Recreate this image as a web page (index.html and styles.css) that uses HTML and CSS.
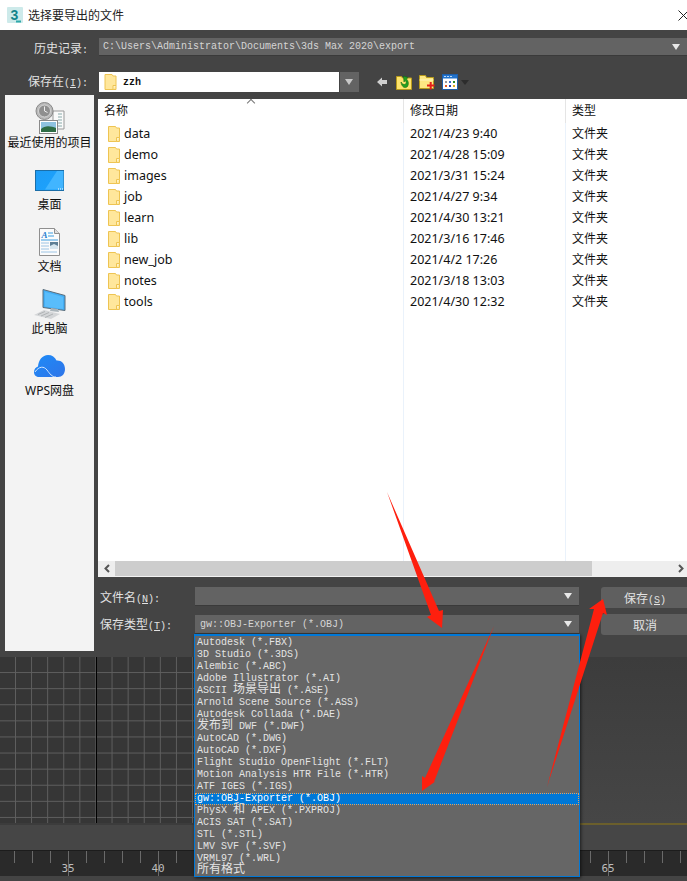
FILE: index.html
```html
<!DOCTYPE html>
<html lang="zh-CN">
<head>
  <meta charset="UTF-8">
  <title>选择要导出的文件</title>
  <link rel="stylesheet" href="styles.css">
</head>
<body>
  <svg class="defs" width="0" height="0">
    <symbol id="folder" viewBox="0 0 12 16">
      <path d="M.5.5h7l1 1.500h3v13.500H.5z" fill="#ffe79c" stroke="#eec452"/>
      <path d="M8.500 15.500v-4h3" fill="#fff3c9" stroke="#eec452"/>
    </symbol>
  </svg>

  <header class="titlebar">
    <svg class="app-icon" width="16" height="16" viewBox="0 0 16 16">
      <rect width="16" height="16" rx="1" fill="#cdeaea"/>
      <text x="7.500" y="12.500" class="app-icon-text">3</text>
      <rect x="9" y="13.500" width="5" height="2" fill="#2fa8aa"/>
    </svg>
    <span class="title">选择要导出的文件</span>
    <svg class="close" width="9" height="11" viewBox="0 0 9 11"><path d="M.5.5l10 10M.5 10.500l10-10" stroke="#222" fill="none"/></svg>
  </header>

  <main class="dialog">
    <div class="history-row">
      <label class="top-label">历史记录<span class="ascii">:</span></label>
      <div class="combo path-combo">C:\Users\Administrator\Documents\3ds Max 2020\export</div>
    </div>

    <div class="savein-row">
      <label class="top-label savein-label">保存在<span class="ascii">(<u>I</u>):</span></label>
      <div class="savein-field">
        <svg class="savein-folder" width="13" height="16"><use href="#folder"/></svg>
        <span>zzh</span>
      </div>
      <div class="savein-drop"></div>
      <div class="toolbar">
        <svg width="10" height="10" viewBox="0 0 10 10"><path d="M0 5l5-4.500v2.500h5v4H5v2.500z" fill="#cfcfcf"/></svg>
        <svg class="tool-up" width="16" height="16" viewBox="0 0 16 16">
          <path d="M.5 2.500h5l1 1.500h9v11.500H.5z" fill="#fde36c" stroke="#b79a1c"/>
          <path d="M5 8c2 3 4 3 5 1.500 1-1.500-1-3-1-3L8 8 7.500 2 12 3.500l-1.500 1.500c2 2 2.500 5 1 7.500C9 15 5.500 13 5 8z" fill="#23a01f" stroke="#0f6a12" stroke-width=".6"/>
        </svg>
        <svg class="tool-new" width="16" height="16" viewBox="0 0 16 16">
          <path d="M.5 1.500h6l1 2h7v11H.5z" fill="#fde883" stroke="#b79a1c"/>
          <path d="M.5 6h14" stroke="#fff6c0"/>
          <path d="M8 11.500h7.500M11.700 8v7.500" stroke="#e5201a" stroke-width="2"/>
        </svg>
        <svg class="tool-view" width="16" height="16" viewBox="0 0 16 16">
          <rect x=".5" y=".5" width="15" height="15" fill="#fff" stroke="#1f5ea8"/>
          <rect x="1" y="1" width="14" height="3.500" fill="#2273cc"/>
          <path d="M2 2h2v1H2zM5 2h2v1H5zM8 2h2v1H8z" fill="#bcd8f5"/>
          <path d="M3 7h2v2H3z" fill="#999"/>
          <path d="M7 7h2v2H7z" fill="#3b6fd0"/>
          <path d="M11 7h2v2h-2z" fill="#2a8a2a"/>
          <path d="M3 11h2v2H3z" fill="#e85a1c"/>
          <path d="M7 11h2v2H7z" fill="#243fb0"/>
          <path d="M11 11h2v2h-2z" fill="#e0a818"/>
        </svg>
        <span class="tool-caret"></span>
      </div>
    </div>

    <div class="dialog-main">
      <nav class="places">
        <a class="place">
          <span class="place-icon">
            <svg width="30" height="33" viewBox="0 0 30 33">
              <path d="M18 9h11v18H18z" fill="#fafafa" stroke="#999"/>
              <path d="M23 12h4M23 15h4M23 18h4M23 21h4M23 24h4" stroke="#8aa"/>
              <circle cx="9.500" cy="9" r="8.500" fill="#b9b9b9" stroke="#8a8a8a"/>
              <circle cx="9.500" cy="9" r="6" fill="#8f8f8f" stroke="#d5d5d5"/>
              <path d="M9.500 4.500V9l3 1.500" stroke="#eee" fill="none"/>
              <rect x="4.500" y="18.500" width="18" height="13" fill="#fff" stroke="#8a8a8a"/>
              <rect x="6" y="20" width="15" height="10" fill="#8fc3e0"/>
              <path d="M6 27c4-4 10-3 15-1v4H6z" fill="#2f6d45"/>
            </svg>
          </span>
          <span class="place-name">最近使用的项目</span>
        </a>
        <a class="place">
          <span class="place-icon">
            <svg width="29" height="21" viewBox="0 0 29 21">
              <defs><linearGradient id="deskGrad" x1="0" y1="0" x2="1" y2="1"><stop offset="0" stop-color="#1e9cf5"/><stop offset="1" stop-color="#1ba3ff"/></linearGradient></defs>
              <rect x=".5" y=".5" width="28" height="20" fill="url(#deskGrad)" stroke="#1b6ea8"/>
              <path d="M10 19.500L22 1h6.500v18.500z" fill="#41b5ff"/>
              <path d="M23 19h1M25 19h1M27 19h1" stroke="#fff"/>
            </svg>
          </span>
          <span class="place-name">桌面</span>
        </a>
        <a class="place">
          <span class="place-icon">
            <svg width="21" height="28" viewBox="0 0 21 28">
              <path d="M.5.500h15l5 5v22H.5z" fill="#fbfbfb" stroke="#8f8f8f"/>
              <path d="M15.500.500v5h5" fill="#ddd" stroke="#8f8f8f"/>
              <text x="2.500" y="10" class="doc-letter">A</text>
              <path d="M9 5h5M9 8h6M2 12h17" stroke="#3d9de0"/>
              <path d="M2 15h8M2 18h8M2 21h8M2 24h16" stroke="#9cc4e4"/>
              <rect x="11" y="14" width="8" height="7" fill="#5e7f95"/>
              <path d="M11 18l4-2 4 2v3h-8z" fill="#d7e6ee"/>
            </svg>
          </span>
          <span class="place-name">文档</span>
        </a>
        <a class="place">
          <span class="place-icon">
            <svg width="32" height="30" viewBox="0 0 32 30">
              <path d="M9 .500l22 6v15l-22-3z" fill="#43aef5" stroke="#5b6d7a"/>
              <path d="M11 3l18 5v12L11 17.500z" fill="#59bdfb"/>
              <path d="M17 19l7 1 1 3-9-1z" fill="#aab4ba"/>
              <path d="M0 26l10-5 16 4-9 5z" fill="#d4d6d8"/>
              <path d="M4 25.500l7-3M7 27l8-3.500M11 28.500l8-3.500" stroke="#b0b3b5"/>
            </svg>
          </span>
          <span class="place-name">此电脑</span>
        </a>
        <a class="place">
          <span class="place-icon">
            <svg width="31" height="22" viewBox="0 0 31 22">
              <defs><linearGradient id="cloudGrad" x1="0" y1="0" x2="1" y2="1"><stop offset="0" stop-color="#1d8cf8"/><stop offset="1" stop-color="#2f74e8"/></linearGradient></defs>
              <path d="M5 22C1.500 22 0 19.500 0 17c0-3 2-5 4-5.500C4.500 5 8.500 0 14 0c4 0 7 2 8.500 5.500C27 5 31 8.500 31 14c0 5-3 8-7 8z" fill="url(#cloudGrad)"/>
              <path d="M1 17c4-6 9-6 12-2 3 4 5 7 9 7" stroke="#cfe6ff" fill="none"/>
            </svg>
          </span>
          <span class="place-name">WPS网盘</span>
        </a>
      </nav>

      <section class="browser">
        <div class="file-list">
          <div class="list-head">
            <span class="head-cell head-name">名称<i class="sort-caret"></i></span>
            <span class="head-cell">修改日期</span>
            <span class="head-cell head-type">类型</span>
          </div>
          <div class="list-body" id="fileRows"></div>
          <div class="hscroll">
            <span class="scroll-btn">
              <svg width="6" height="9" viewBox="0 0 6 9"><path d="M5 1L1.500 4.500 5 8" stroke="#555" stroke-width="2" fill="none"/></svg>
            </span>
            <span class="scroll-thumb"></span>
            <span class="scroll-end">
              <svg width="6" height="9" viewBox="0 0 6 9"><path d="M1 1l3.500 3.500L1 8" stroke="#555" stroke-width="2" fill="none"/></svg>
            </span>
          </div>
        </div>

        <div class="save-form">
          <div class="form-fields">
            <div class="form-row">
              <label>文件名<span class="ascii">(<u>N</u>):</span></label>
              <div class="combo field-combo"></div>
            </div>
            <div class="form-row type-row">
              <label>保存类型<span class="ascii">(<u>T</u>):</span></label>
              <div class="combo field-combo">gw::OBJ-Exporter (*.OBJ)</div>
            </div>
          </div>
          <div class="form-buttons">
            <button class="btn">保存<span class="ascii">(<u>S</u>)</span></button>
            <button class="btn">取消</button>
          </div>
        </div>
      </section>
    </div>
  </main>

  <section class="viewport">
    <div class="viewport-top">
      <div class="grid-view"></div>
      <div class="side-view"></div>
    </div>
    <div class="band"></div>
    <div class="timeline">
      <span class="tick-cell">35</span>
      <span class="tick-cell">40</span>
      <span class="tick-cell">45</span>
      <span class="tick-cell">50</span>
      <span class="tick-cell">55</span>
      <span class="tick-cell">60</span>
      <span class="tick-cell">65</span>
    </div>
    <div class="status"></div>
  </section>

  <ul class="type-menu" id="typeMenu"></ul>

  <svg class="arrows" width="687" height="881" viewBox="0 0 687 881">
    <path d="M387 492L439 611l4-1-1 18-15-11 4-2z"/>
    <path d="M494 626L434 782l2-1-14 10v-15l3 2z"/>
    <path d="M547 787L594 609h-5l14-10 4 16-4-2z"/>
  </svg>

  <script src="app.js"></script>
</body>
</html>
```

FILE: app.js
```js
const files = [
  ["data", "2021/4/23 9:40"],
  ["demo", "2021/4/28 15:09"],
  ["images", "2021/3/31 15:24"],
  ["job", "2021/4/27 9:34"],
  ["learn", "2021/4/30 13:21"],
  ["lib", "2021/3/16 17:46"],
  ["new_job", "2021/4/2 17:26"],
  ["notes", "2021/3/18 13:03"],
  ["tools", "2021/4/30 12:32"]
];

const types = [
  "Autodesk (*.FBX)",
  "3D Studio (*.3DS)",
  "Alembic (*.ABC)",
  "Adobe Illustrator (*.AI)",
  "ASCII <b>场景导出</b> (*.ASE)",
  "Arnold Scene Source (*.ASS)",
  "Autodesk Collada (*.DAE)",
  "<b>发布到</b> DWF (*.DWF)",
  "AutoCAD (*.DWG)",
  "AutoCAD (*.DXF)",
  "Flight Studio OpenFlight (*.FLT)",
  "Motion Analysis HTR File (*.HTR)",
  "ATF IGES (*.IGS)",
  "gw::OBJ-Exporter (*.OBJ)",
  "PhysX <b>和</b> APEX (*.PXPROJ)",
  "ACIS SAT (*.SAT)",
  "STL (*.STL)",
  "LMV SVF (*.SVF)",
  "VRML97 (*.WRL)",
  "<b>所有格式</b>"
];

const rows = document.getElementById("fileRows");
files.forEach((file) => {
  const row = document.createElement("div");
  row.className = "file-row";
  row.innerHTML = `
    <span class="file-name"><svg width="12" height="16"><use href="#folder"/></svg>${file[0]}</span>
    <span class="file-date">${file[1]}</span>
    <span class="file-type">文件夹</span>
  `;
  rows.appendChild(row);
});

const menu = document.getElementById("typeMenu");
types.forEach((type, index) => {
  const item = document.createElement("li");
  item.innerHTML = type;
  if (index === 13) item.className = "selected";
  menu.appendChild(item);
});
```

FILE: styles.css
```css
* {
  box-sizing: border-box;
}
body {
  margin: 0;
  width: 687px;
  height: 881px;
  overflow: hidden;
  position: relative;
  background-color: #444;
  font-family: "Noto Sans", "Noto Sans CJK SC", sans-serif;
  font-size: 12px;
}
.defs {
  position: absolute;
}
u {
  text-underline-offset: 1px;
}
.ascii {
  font-family: "Liberation Mono", monospace;
  font-size: 10px;
}

/* title bar */
.titlebar {
  height: 30px;
  background-color: #fff;
  display: flex;
  align-items: center;
  padding-left: 7px;
  color: #222;
}
.app-icon-text {
  font: bold 14px "Liberation Sans", sans-serif;
  fill: #14858c;
  text-anchor: middle;
}
.title {
  margin-left: 5px;
  margin-bottom: 2px;
  font-family: "Noto Sans CJK SC", sans-serif;
}
.close {
  margin-left: auto;
}

/* dialog */
.dialog {
  height: 627px;
  background-color: #444;
  padding-top: 8px;
  color: #e2e2e2;
}
.history-row {
  display: flex;
  height: 18px;
  align-items: center;
}
.top-label {
  width: 99px;
  padding-right: 11px;
  text-align: right;
  font-family: "Noto Sans CJK SC", sans-serif;
  white-space: nowrap;
}
.savein-label {
  margin-bottom: 4px;
}
.combo {
  background-color: #636363;
  border-bottom: 1px solid #3a3a3a;
  height: 100%;
  display: flex;
  align-items: center;
  position: relative;
  font-family: "Liberation Mono", "Noto Sans CJK SC", monospace;
  font-size: 10px;
  color: #d5d5d5;
  padding-left: 4px;
}
.combo::after {
  content: "";
  position: absolute;
  right: 7px;
  top: 6px;
  border-left: 4px solid transparent;
  border-right: 4px solid transparent;
  border-top: 6px solid #e8e8e8;
}
.path-combo {
  flex: 1;
}
.savein-row {
  display: flex;
  height: 20px;
  margin-top: 16px;
  align-items: center;
}
.savein-field {
  width: 240px;
  height: 20px;
  background-color: #fff;
  display: flex;
  align-items: center;
  gap: 6px;
  padding-left: 5px;
  color: #111;
  font-family: "Liberation Mono", monospace;
  font-size: 10px;
  font-weight: bold;
}
.savein-drop {
  width: 19px;
  height: 20px;
  margin-left: 1px;
  background-color: #636363;
  position: relative;
}
.savein-drop::after {
  content: "";
  position: absolute;
  left: 5px;
  top: 7px;
  border-left: 4px solid transparent;
  border-right: 4px solid transparent;
  border-top: 6px solid #c8c8c8;
}
.toolbar {
  display: flex;
  align-items: center;
  margin-left: 18px;
}
.tool-up {
  margin-left: 9px;
}
.tool-new {
  margin-left: 7px;
}
.tool-view {
  margin-left: 7px;
}
.tool-caret {
  margin-left: 3px;
  border-left: 4px solid transparent;
  border-right: 4px solid transparent;
  border-top: 5px solid #2c2c2c;
}
.dialog-main {
  display: flex;
  margin-top: 3px;
  padding-left: 5px;
  height: 556px;
}

/* places */
.places {
  width: 89px;
  background-color: #f3f3f3;
  color: #111;
  flex-shrink: 0;
}
.place {
  display: block;
  height: 62px;
  text-align: center;
}
.place-icon {
  display: flex;
  height: 40px;
  padding-top: 6px;
  align-items: center;
  justify-content: center;
}
.place-name {
  display: block;
  line-height: 16px;
  white-space: nowrap;
}
.doc-letter {
  font: italic bold 9px "Liberation Serif", serif;
  fill: #2a7fd0;
}

/* file list */
.browser {
  flex: 1;
  margin-left: 4px;
  padding-top: 4px;
}
.file-list {
  height: 478px;
  background-color: #fff;
  display: flex;
  flex-direction: column;
  color: #111;
  border-bottom: 1px solid #f2f2f2;
}
.list-head {
  display: grid;
  grid-template-columns: 306px 162px 1fr;
  height: 24px;
  position: relative;
}
.head-cell {
  padding-left: 6px;
  line-height: 24px;
  border-right: 1px solid #e5e5e5;
  position: relative;
}
.head-type {
  border-right: 0;
}
.sort-caret {
  position: absolute;
  left: 150px;
  top: 1px;
  width: 6px;
  height: 6px;
  border-left: 1px solid #777;
  border-top: 1px solid #777;
  transform: rotate(45deg);
}
.list-body {
  flex: 1;
  background-image: linear-gradient(#eaf2fb, #eaf2fb), linear-gradient(#eaf2fb, #eaf2fb);
  background-size: 1px 100%;
  background-position: 305px 0, 467px 0;
  background-repeat: no-repeat;
}
.file-row {
  display: grid;
  grid-template-columns: 306px 162px 1fr;
  height: 21px;
  align-items: center;
  font-size: 12.500px;
}
.file-name {
  display: flex;
  align-items: center;
  gap: 4px;
  padding-left: 10px;
}
.file-date {
  padding-left: 6px;
}
.file-type {
  padding-left: 6px;
  margin-top: -2px;
  font-size: 12px;
}
.hscroll {
  display: flex;
  height: 15px;
  background-color: #eee;
  align-items: center;
}
.scroll-btn {
  width: 17px;
  text-align: center;
  line-height: 0;
}
.scroll-thumb {
  width: 477px;
  height: 100%;
  background-color: #cdcdcd;
}
.scroll-end {
  margin-left: auto;
  padding-right: 3px;
  line-height: 0;
}

/* file name + type */
.save-form {
  display: flex;
  margin-top: 10px;
}
.form-fields {
  width: 481px;
  margin-right: 22px;
}
.form-row {
  display: flex;
  height: 19px;
  align-items: center;
  font-family: "Noto Sans CJK SC", sans-serif;
}
.type-row {
  margin-top: 9px;
}
.form-row label {
  width: 97px;
  padding-left: 2px;
  flex-shrink: 0;
  white-space: nowrap;
}
.type-row label {
  margin-bottom: 3px;
}
.field-combo {
  flex: 1;
  padding-left: 5px;
}
.form-buttons {
  flex: 1;
  display: flex;
  flex-direction: column;
  gap: 6px;
}
.btn {
  height: 21px;
  background-color: #5f5f5f;
  border: 0;
  border-radius: 3px 0 0 3px;
  color: #e2e2e2;
  font: 12px "Noto Sans CJK SC", sans-serif;
  padding: 0 0 0 2px;
}

/* max viewport behind the dialog */
.viewport {
  height: 224px;
  display: flex;
  flex-direction: column;
}
.viewport-top {
  display: flex;
  height: 168px;
}
.grid-view {
  width: 580px;
  background-color: #363636;
  background-image:
    linear-gradient(to right, #5f5f5f 1px, transparent 1px),
    linear-gradient(to bottom, #5f5f5f 1px, transparent 1px);
  background-size: 16.100px 16.100px;
  background-position: 15px -1px;
  border-bottom: 2px solid #3c3c3c;
  position: relative;
}
.grid-view::after {
  content: "";
  position: absolute;
  left: 96px;
  top: 0;
  bottom: 0;
  width: 1px;
  background-color: #000;
}
.side-view {
  flex: 1;
  background: linear-gradient(#3c3c3c, #464646);
  border-bottom: 2px solid #6b5f2c;
}
.band {
  height: 25px;
  background-color: #464646;
}
.timeline {
  height: 26px;
  background-color: #2a2a2a;
  border-top: 1px solid #1c1c1c;
  display: flex;
  overflow: hidden;
  background-image: linear-gradient(to right, #6a6a6a 1px, transparent 1px);
  background-size: 18px 12px;
  background-position: 14px 0;
  background-repeat: repeat-x;
}
.tick-cell {
  flex: 0 0 90px;
  text-align: center;
  color: #bdbdbd;
  font: 11px/36px "DejaVu Sans Mono", monospace;
  background: linear-gradient(#6a6a6a, #6a6a6a) center / 1px 100% no-repeat;
}
.tick-cell:first-child {
  margin-left: 23px;
}
.status {
  flex: 1;
  background-color: #444;
}

/* file type drop-down */
.type-menu {
  position: absolute;
  left: 194px;
  top: 634px;
  width: 386px;
  height: 243px;
  margin: 0;
  padding: 1px 0 0 2px;
  list-style: none;
  background-color: #666;
  border: 1px solid #0078d7;
  border-top-width: 2px;
  box-shadow: 1px 1px 3px rgba(0, 0, 0, 0.6);
  color: #e4e4e4;
  font: 10px/12px "Liberation Mono", "Noto Sans CJK SC", monospace;
  white-space: pre;
}
.type-menu b {
  font: 12px/0 "Noto Sans CJK SC", sans-serif;
}
.type-menu li {
  height: 12px;
}
.type-menu .selected {
  background-color: #0078d7;
  color: #fff;
  margin: 0 0 0 -2px;
  padding-left: 2px;
  outline: 1px dotted #f0a050;
  outline-offset: -1px;
}

/* red annotation arrows */
.arrows {
  position: absolute;
  left: 0;
  top: 0;
  fill: #fe1f0e;
  pointer-events: none;
}
```
